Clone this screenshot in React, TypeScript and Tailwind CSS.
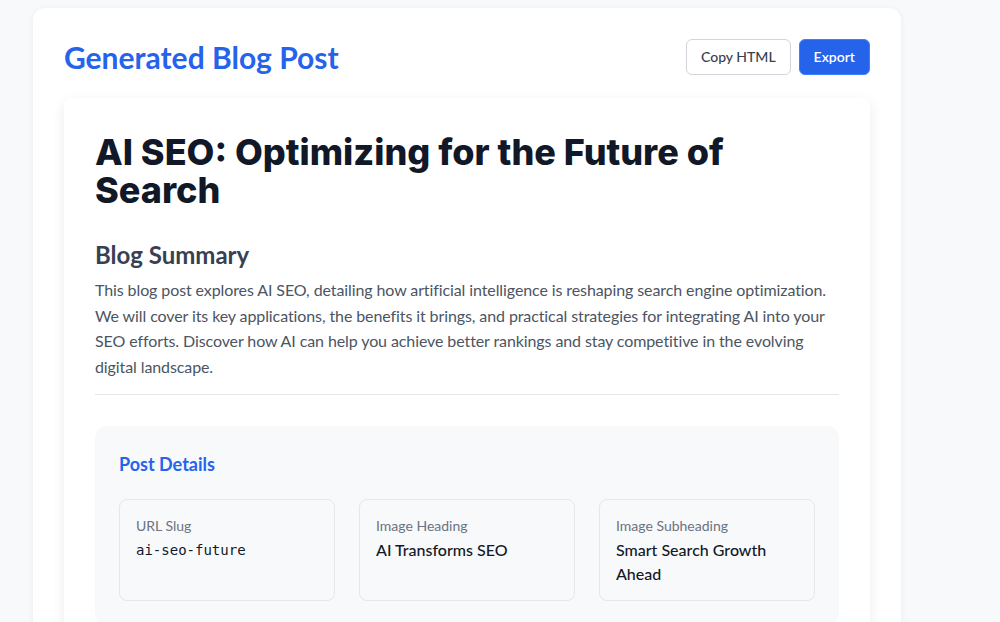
import React from "react";

const details = [
  { label: "URL Slug", value: "ai-seo-future", mono: true },
  { label: "Image Heading", value: "AI Transforms SEO" },
  { label: "Image Subheading", value: "Smart Search Growth Ahead" },
];

export default function App() {
  return (
    <div className="min-h-screen bg-[#f8f9fa] pl-[33px] pt-2 font-['Lato','Noto_Sans',sans-serif]">
      <div className="w-[868px] rounded-xl bg-white p-[31px] shadow-[0_1px_6px_rgba(0,0,0,0.06)]">
        {/* header */}
        <div className="mb-[23px] flex items-center justify-between">
          <h1 className="text-3xl font-bold text-[#2563eb]">Generated Blog Post</h1>
          <div className="flex gap-2">
            <button className="h-9 rounded-md border border-[#d1d5db] bg-white px-[14px] text-sm font-medium text-[#374151]">
              Copy HTML
            </button>
            <button className="h-9 rounded-md border border-[#3b82f6] bg-[#2563eb] px-[14px] text-sm font-semibold text-white">
              Export
            </button>
          </div>
        </div>

        {/* article */}
        <div className="rounded-lg bg-white px-[31px] pt-[35px] pb-[31px] shadow-[0_4px_14px_rgba(0,0,0,0.08)]">
          <h2 className="font-['Inter',sans-serif] text-4xl leading-[38px] font-extrabold text-[#111827]">
            AI SEO: Optimizing for the Future of Search
          </h2>

          <div className="border-b border-[#e5e7eb] pb-[15px]">
            <h3 className="mt-[30px] mb-[6px] text-2xl leading-8 font-bold text-[#374151]">Blog Summary</h3>
            <p className="text-base leading-[25.6px] tracking-[-0.1px] text-[#4b5563]">
              This blog post explores AI SEO, detailing how artificial intelligence is reshaping search engine
              optimization. We will cover its key applications, the benefits it brings, and practical strategies
              for integrating AI into your SEO efforts. Discover how AI can help you achieve better rankings and
              stay competitive in the evolving digital landscape.
            </p>
          </div>

          <div className="mt-[31px] rounded-xl bg-[#f8f9fb] p-6">
            <h4 className="mb-[21px] text-lg font-bold text-[#2563eb]">Post Details</h4>
            <div className="grid grid-cols-3 gap-6">
              {details.map((d) => (
                <div key={d.label} className="rounded-lg border border-[#e5e7eb] px-4 pt-4 pb-[14px]">
                  <div className="mb-0.5 text-sm leading-5 text-[#6b7280]">{d.label}</div>
                  <div
                    className={
                      d.mono
                        ? "font-['DejaVu_Sans_Mono',monospace] text-sm leading-6 text-[#111827]"
                        : "text-base leading-6 font-medium text-[#111827]"
                    }
                  >
                    {d.value}
                  </div>
                </div>
              ))}
            </div>
          </div>
        </div>
      </div>
    </div>
  );
}
